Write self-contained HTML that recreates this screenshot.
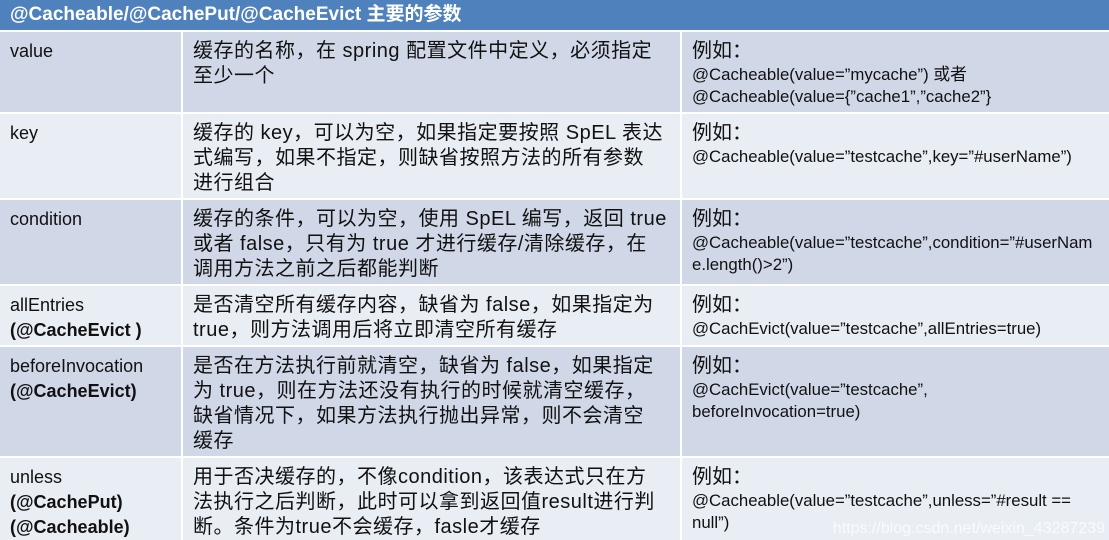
<!DOCTYPE html><html><head><meta charset="utf-8"><style>
body{margin:0;width:1109px;height:540px;overflow:hidden;background:#e9edf4;font-family:"Liberation Sans","Noto Sans CJK SC",sans-serif;color:#111}
.h{position:absolute;left:0;top:0;width:1109px;height:30px;background:#4f81bd;color:#fff;font-weight:bold;font-size:19px;letter-spacing:0;line-height:30px;padding-left:10px;box-sizing:border-box}
.r{position:absolute;left:0;width:1109px;border-top:2px solid #fff;box-sizing:border-box}
.c{position:absolute;top:0;bottom:0;box-sizing:border-box;padding:7px 10px 0 10px;font-size:18px;line-height:25px;white-space:nowrap}
.c1{left:0;width:181px}.c2{left:181px;width:499px;border-left:2px solid #fff;font-size:20px;letter-spacing:0.5px}.c3{left:680px;width:429px;border-left:2px solid #fff;font-size:20px}
.d{background:#d0d8e8}.l{background:#e9edf4}
.c3 .e{font-size:16.8px;line-height:22px;letter-spacing:0}
.wm{position:absolute;right:4px;bottom:2px;color:rgba(255,255,255,0.75);font-size:16px}
</style></head><body>
<div class="h">@Cacheable/@CachePut/@CacheEvict 主要的参数</div>
<div class="r d" style="top:30px;height:82px"><div class="c c1">value</div><div class="c c2">缓存的名称，在 spring 配置文件中定义，必须指定<br>至少一个</div><div class="c c3">例如：<div class="e">@Cacheable(value=”mycache”) 或者<br>@Cacheable(value={”cache1”,”cache2”}</div></div></div>
<div class="r l" style="top:112px;height:87px"><div class="c c1">key</div><div class="c c2">缓存的 key，可以为空，如果指定要按照 SpEL 表达<br>式编写，如果不指定，则缺省按照方法的所有参数<br>进行组合</div><div class="c c3">例如：<div class="e">@Cacheable(value=”testcache”,key=”#userName”)</div></div></div>
<div class="r d" style="top:198px;height:87px"><div class="c c1">condition</div><div class="c c2">缓存的条件，可以为空，使用 SpEL 编写，返回 true<br>或者 false，只有为 true 才进行缓存/清除缓存，在<br>调用方法之前之后都能判断</div><div class="c c3">例如：<div class="e">@Cacheable(value=”testcache”,condition=”#userNam<br>e.length()&gt;2”)</div></div></div>
<div class="r l" style="top:284px;height:62px"><div class="c c1">allEntries<br><b>(@CacheEvict )</b></div><div class="c c2">是否清空所有缓存内容，缺省为 false，如果指定为<br>true，则方法调用后将立即清空所有缓存</div><div class="c c3">例如：<div class="e">@CachEvict(value=”testcache”,allEntries=true)</div></div></div>
<div class="r d" style="top:345px;height:112px"><div class="c c1">beforeInvocation<br><b>(@CacheEvict)</b></div><div class="c c2">是否在方法执行前就清空，缺省为 false，如果指定<br>为 true，则在方法还没有执行的时候就清空缓存，<br>缺省情况下，如果方法执行抛出异常，则不会清空<br>缓存</div><div class="c c3">例如：<div class="e">@CachEvict(value=”testcache”,<br>beforeInvocation=true)</div></div></div>
<div class="r l" style="top:456px;height:84px"><div class="c c1">unless<br><b>(@CachePut)<br>(@Cacheable)</b></div><div class="c c2">用于否决缓存的，不像condition，该表达式只在方<br>法执行之后判断，此时可以拿到返回值result进行判<br>断。条件为true不会缓存，fasle才缓存</div><div class="c c3">例如：<div class="e">@Cacheable(value=”testcache”,unless=”#result ==<br>null”)</div></div></div>
<div class="wm">https://blog.csdn.net/weixin_43287239</div>
</body></html>
